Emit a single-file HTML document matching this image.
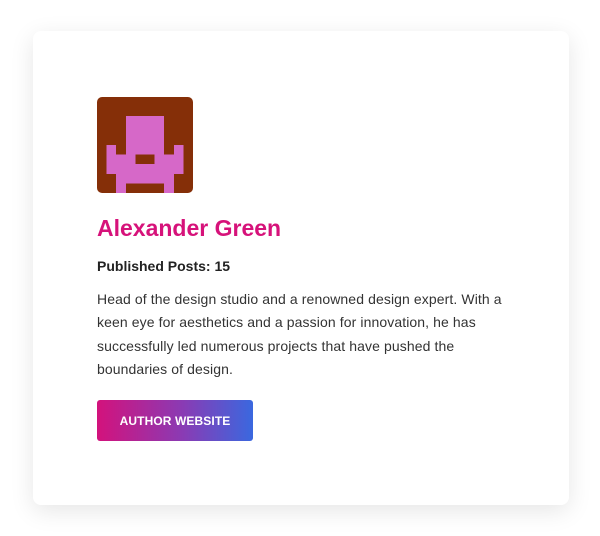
<!DOCTYPE html>
<html><head><style>
html,body{margin:0;padding:0;background:#fff;width:600px;height:536px;overflow:hidden}
body{font-family:"Liberation Sans",sans-serif;position:relative}
.card{position:absolute;left:33px;top:31px;width:536px;height:474px;background:#fff;border-radius:8px;box-shadow:0 6px 24px rgba(0,0,0,0.10)}
.avw{position:absolute;left:97px;top:97px;width:96px;height:96px;border-radius:5px;overflow:hidden}
.avw svg{display:block;width:96px;height:96px}
h1{position:absolute;left:97px;top:215px;margin:0;font-size:23px;font-weight:bold;color:#d6127a;letter-spacing:0;white-space:nowrap}
.pp{position:absolute;left:97px;top:258px;font-size:14px;font-weight:bold;color:#222}
.d{position:absolute;left:97px;top:288px;font-size:14px;line-height:23.3px;color:#333;white-space:nowrap;letter-spacing:0.1px}
.btn{position:absolute;left:97px;top:400px;width:156px;height:41px;border-radius:3px;background:linear-gradient(90deg,#d3127c,#8a3bb4 55%,#3a68df);color:#fff;font-size:12px;font-weight:bold;display:flex;align-items:center;justify-content:center;letter-spacing:0.1px}
</style></head><body>
<div class="card"></div>
<div class="avw"><svg viewBox="0 0 10 10" shape-rendering="crispEdges">
<rect width="10" height="10" fill="#852f08"/>
<g fill="#d668c8">
<rect x="3" y="2" width="4" height="4"/>
<rect x="1" y="5" width="1" height="3"/>
<rect x="8" y="5" width="1" height="3"/>
<rect x="1" y="6" width="8" height="2"/>
<rect x="2" y="8" width="6" height="1"/>
<rect x="2" y="9" width="1" height="1"/>
<rect x="7" y="9" width="1" height="1"/>
</g>
<rect x="4" y="6" width="2" height="1" fill="#852f08"/>
</svg></div>
<h1>Alexander Green</h1>
<div class="pp">Published Posts: 15</div>
<div class="d">Head of the design studio and a renowned design expert. With a<br>keen eye for aesthetics and a passion for innovation, he has<br>successfully led numerous projects that have pushed the<br>boundaries of design.</div>
<div class="btn">AUTHOR WEBSITE</div>
</body></html>
